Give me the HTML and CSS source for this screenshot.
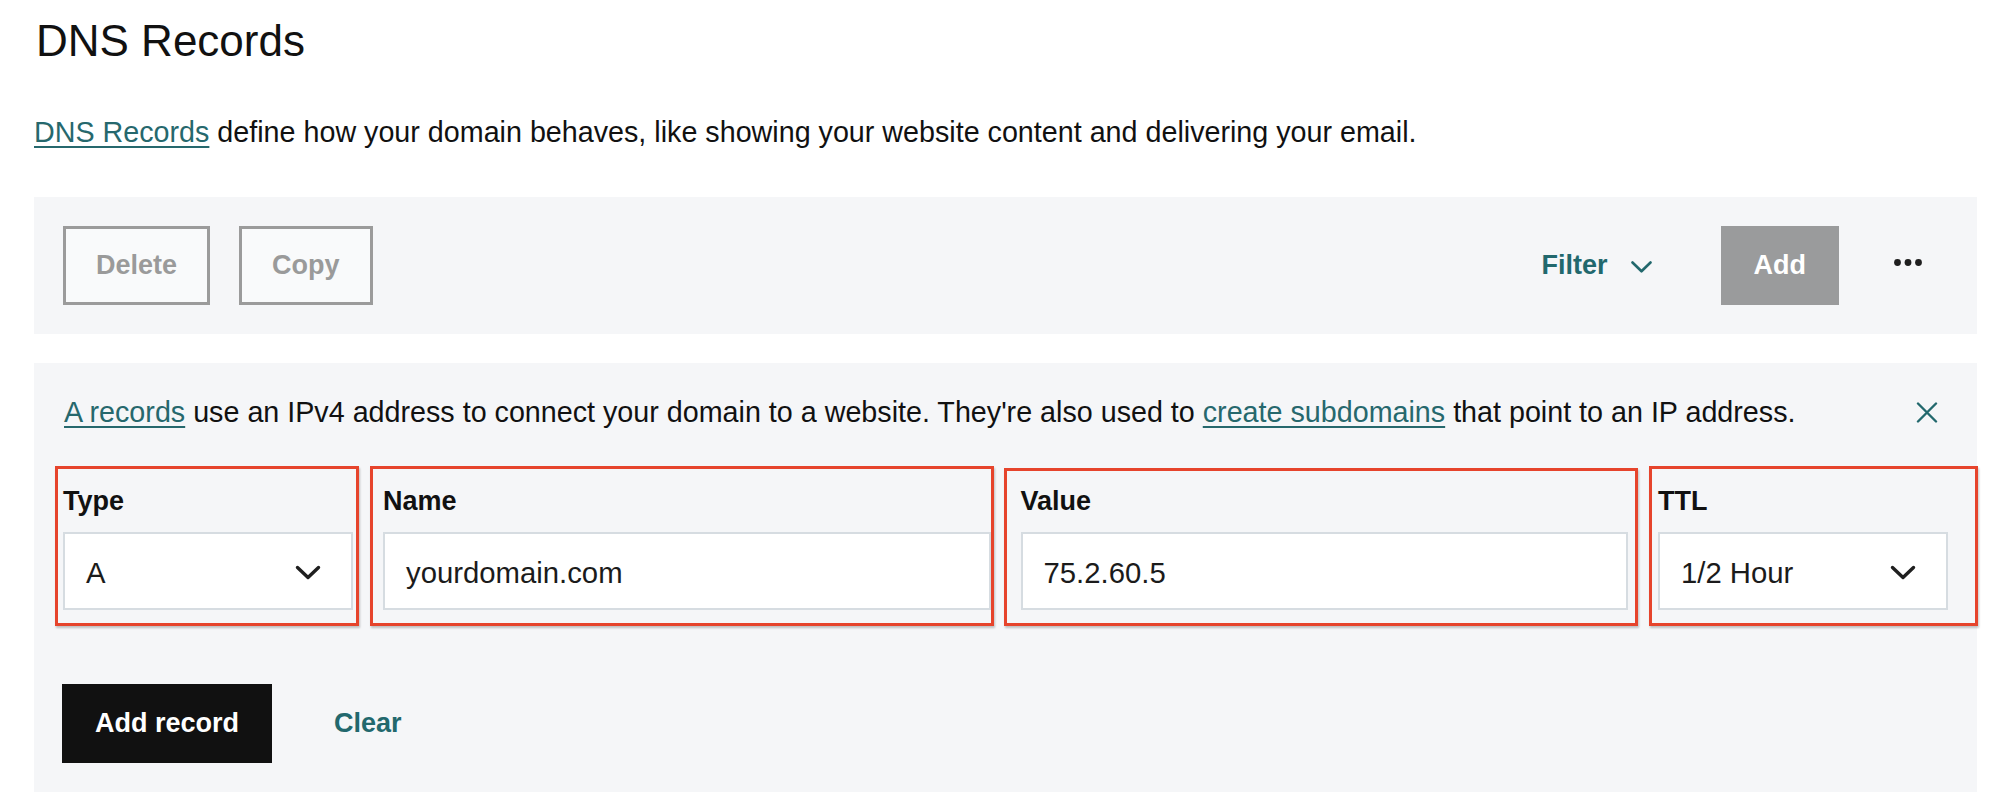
FILE: index.html
```html
<!DOCTYPE html>
<html lang="en">
<head>
<meta charset="utf-8">
<title>DNS Records</title>
<link rel="stylesheet" href="styles.css">
</head>
<body>
<main class="page">
  <h1 class="title">DNS Records</h1>
  <p class="intro"><a class="link" href="#">DNS Records</a> define how your domain behaves, like showing your website content and delivering your email.</p>

  <div class="toolbar">
    <div class="toolbar-left">
      <button class="btn-outline">Delete</button>
      <button class="btn-outline">Copy</button>
    </div>
    <div class="toolbar-right">
      <button class="filter">Filter
        <svg class="filter-chevron" width="21" height="12" viewBox="0 0 21 12"><path d="M1.5 1.5 L10.5 10.3 L19.5 1.5" fill="none" stroke="currentColor" stroke-width="2.6" stroke-linecap="round" stroke-linejoin="round"/></svg>
      </button>
      <button class="btn-add">Add</button>
      <button class="more" aria-label="More">
        <svg width="28" height="7" viewBox="0 0 28 7"><circle cx="3.5" cy="3.5" r="3.4" fill="#1f1f1f"/><circle cx="14" cy="3.5" r="3.4" fill="#1f1f1f"/><circle cx="24.5" cy="3.5" r="3.4" fill="#1f1f1f"/></svg>
      </button>
    </div>
  </div>

  <section class="editor">
    <div class="notice">
      <p class="notice-text"><a class="link" href="#">A records</a> use an IPv4 address to connect your domain to a website. They're also used to <a class="link" href="#">create subdomains</a> that point to an IP address.</p>
      <button class="close" aria-label="Close">
        <svg width="22" height="21" viewBox="0 0 22 21"><path d="M2 1.5 L20 19.5 M20 1.5 L2 19.5" fill="none" stroke="currentColor" stroke-width="2.4" stroke-linecap="round"/></svg>
      </button>
    </div>

    <div class="fields">
      <div class="field">
        <span class="field-label">Type</span>
        <div class="control">
          <span class="control-value">A</span>
          <svg class="chevron" width="26" height="15" viewBox="0 0 26 15"><path d="M2.5 2.5 L13 12.5 L23.5 2.5" fill="none" stroke="#1f1f1f" stroke-width="3.4" stroke-linecap="round" stroke-linejoin="round"/></svg>
        </div>
        <span class="mark mark-type"></span>
      </div>
      <div class="field">
        <span class="field-label">Name</span>
        <div class="control"><span class="control-value">yourdomain.com</span></div>
        <span class="mark mark-name"></span>
      </div>
      <div class="field">
        <span class="field-label">Value</span>
        <div class="control"><span class="control-value">75.2.60.5</span></div>
        <span class="mark mark-value"></span>
      </div>
      <div class="field">
        <span class="field-label">TTL</span>
        <div class="control">
          <span class="control-value">1/2 Hour</span>
          <svg class="chevron" width="26" height="15" viewBox="0 0 26 15"><path d="M2.5 2.5 L13 12.5 L23.5 2.5" fill="none" stroke="#1f1f1f" stroke-width="3.4" stroke-linecap="round" stroke-linejoin="round"/></svg>
        </div>
        <span class="mark mark-ttl"></span>
      </div>
    </div>

    <div class="actions">
      <button class="btn-primary">Add record</button>
      <button class="btn-link">Clear</button>
    </div>
  </section>
</main>
</body>
</html>
```

FILE: styles.css
```css
* { box-sizing: border-box; }

html, body {
  margin: 0;
  padding: 0;
  background: #ffffff;
}

body {
  font-family: "Liberation Sans", Arial, sans-serif;
  color: #111111;
}

.page {
  width: 1977px;
  padding: 15px 0 0 34px;
}

.title {
  margin: 0;
  font-size: 44px;
  font-weight: 400;
  line-height: 1.2;
  color: #111111;
  padding-left: 2px;
}

.intro {
  margin: 47px 0 0 0;
  font-size: 28.7px;
  line-height: 1.2;
}

.link {
  color: #26686d;
  text-decoration: underline;
  text-decoration-thickness: 2px;
  text-underline-offset: 4px;
}

button {
  font-family: inherit;
  cursor: pointer;
}

/* toolbar */
.toolbar {
  display: flex;
  align-items: center;
  justify-content: space-between;
  margin-top: 48px;
  height: 137px;
  padding: 0 29px;
  background: #f5f6f8;
}

.toolbar-left {
  display: flex;
  gap: 29px;
}

.btn-outline {
  height: 79px;
  padding: 0 30px;
  border: 3px solid #9b9b9b;
  background: #f9fafb;
  color: #9a9a9a;
  font-size: 27px;
  font-weight: 700;
}

.toolbar-right {
  display: flex;
  align-items: center;
}

.filter {
  display: flex;
  align-items: center;
  gap: 23px;
  border: 0;
  background: transparent;
  padding: 0;
  margin-right: 69px;
  color: #22686d;
  font-size: 27px;
  font-weight: 700;
}

.filter-chevron { margin-top: 2px; }

.btn-add {
  height: 79px;
  padding: 0 30px;
  border: 3px solid #9a9b9c;
  background: #9a9b9c;
  color: #ffffff;
  font-size: 27px;
  font-weight: 700;
}

.more {
  display: flex;
  align-items: center;
  border: 0;
  background: transparent;
  padding: 0 26px 7px 55px;
}

/* editor panel */
.editor {
  margin-top: 29px;
  padding: 32px 29px 29px 29px;
  background: #f5f6f8;
}

.notice {
  display: flex;
  align-items: center;
  justify-content: space-between;
}

.notice-text {
  margin: 0 0 0 1px;
  font-size: 28.7px;
  line-height: 1.2;
}

.close {
  display: flex;
  border: 0;
  background: transparent;
  padding: 0;
  margin-right: 10px;
  color: #22686d;
}

.fields {
  display: grid;
  grid-template-columns: 290px 1fr 1fr 290px;
  column-gap: 30px;
  margin-top: 55px;
}

.field {
  position: relative;
  display: flex;
  flex-direction: column;
}

.field-label {
  font-size: 27px;
  font-weight: 700;
  line-height: 1.2;
  margin-bottom: 15px;
}

.control {
  display: flex;
  align-items: center;
  justify-content: space-between;
  height: 78px;
  padding: 4px 30px 0 21px;
  background: #ffffff;
  border: 2px solid #d6dce1;
}

.control-value {
  font-size: 29.3px;
  color: #1b1b1b;
}

.chevron { margin-top: -2px; }

/* annotation boxes drawn over the fields */
.mark {
  position: absolute;
  top: -19px;
  bottom: -16px;
  border: 3px solid #e6442c;
  box-shadow: 1px 2px 2px rgba(0, 0, 0, 0.22);
  pointer-events: none;
}

.mark-type { left: -8px; right: -6px; }
.mark-name { left: -13px; right: -3px; }
.mark-value { left: -17px; right: -10px; top: -17px; }
.mark-ttl { left: -9px; right: -30px; }

/* actions */
.actions {
  display: flex;
  align-items: center;
  gap: 62px;
  margin-top: 74px;
}

.btn-primary {
  height: 79px;
  padding: 0 33px;
  border: 0;
  background: #111111;
  color: #ffffff;
  font-size: 27px;
  font-weight: 700;
  margin-left: -1px;
}

.btn-link {
  border: 0;
  background: transparent;
  padding: 0;
  color: #22686d;
  font-size: 27px;
  font-weight: 700;
}
```
